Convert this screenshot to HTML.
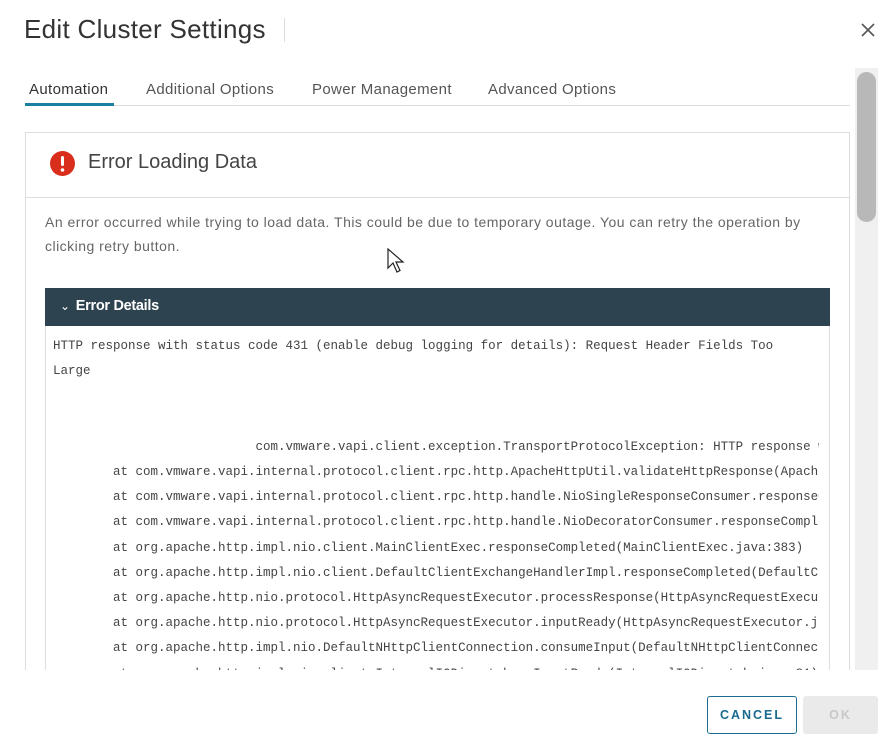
<!DOCTYPE html>
<html><head><meta charset="utf-8"><style>
*{margin:0;padding:0;box-sizing:border-box}
body{width:886px;height:744px;background:#fff;font-family:"Liberation Sans",sans-serif;position:relative;overflow:hidden;color:#333}
.abs{position:absolute}
h1{position:absolute;left:24px;top:14px;font-weight:normal;font-size:26px;color:#333;letter-spacing:0.3px}
.sep{left:284px;top:18px;width:1px;height:24px;background:#ddd}
.close{left:860px;top:22px}
.tab{top:81px;font-size:15px;color:#555;white-space:nowrap;letter-spacing:0.35px}
.tabline{left:25px;top:105px;width:825px;height:1px;background:#ddd}
.active{left:25px;top:103px;width:89px;height:3px;background:#1a7fa0}
.card{left:25px;top:132px;width:825px;height:560px;border:1px solid #ddd;border-bottom:none}
.cardhd{left:26px;top:197px;width:823px;height:1px;background:#ddd}
.desc{left:45px;font-size:14px;color:#666;white-space:nowrap;letter-spacing:0.48px}
.bar{left:45px;top:288px;width:785px;height:38px;background:#2e4350;color:#fff;font-size:14.5px;font-weight:bold;padding:10px 0 0 15px;letter-spacing:-0.3px}
.codebox{left:45px;top:326px;width:785px;height:344px;border-left:1px solid #ddd;border-right:1px solid #ddd;overflow:hidden}
.clip{width:773px;height:344px;overflow:hidden}
pre{font-family:"Liberation Mono",monospace;font-size:12.5px;line-height:25.2px;color:#444;padding:8px 0 0 7px;white-space:pre}
.foot{left:0;top:670px;width:886px;height:74px;background:#fff}
.track{left:855px;top:68px;width:23px;height:602px;background:#f0f0f0}
.thumb{left:857px;top:72px;width:19px;height:150px;background:#b8b8b8;border-radius:10px}
.btn{top:696px;height:38px;font-size:12.5px;letter-spacing:2px;text-align:center;line-height:36px;font-weight:bold}
</style></head><body>
<h1>Edit Cluster Settings</h1>
<div class="abs sep"></div>
<svg class="abs close" width="16" height="16" viewBox="0 0 16 16"><path d="M2 2L14 14M14 2L2 14" stroke="#555" stroke-width="1.6"/></svg>
<div class="abs tab" style="left:29px;color:#333">Automation</div>
<div class="abs tab" style="left:146px">Additional Options</div>
<div class="abs tab" style="left:312px">Power Management</div>
<div class="abs tab" style="left:488px">Advanced Options</div>
<div class="abs tabline"></div>
<div class="abs active"></div>
<div class="abs card"></div>
<div class="abs cardhd"></div>
<svg class="abs" style="left:50px;top:151px" width="25" height="25" viewBox="0 0 25 25"><circle cx="12.5" cy="12.5" r="12.5" fill="#d92e1b"/><rect x="11" y="5" width="3" height="10" rx="1.5" fill="#fff"/><circle cx="12.5" cy="19" r="1.8" fill="#fff"/></svg>
<div class="abs" style="left:88px;top:151px;font-size:20px;color:#444">Error Loading Data</div>
<div class="abs desc" style="top:214px">An error occurred while trying to load data. This could be due to temporary outage. You can retry the operation by</div>
<div class="abs desc" style="top:238px">clicking retry button.</div>
<svg class="abs" style="left:387px;top:248px" width="18" height="26" viewBox="0 0 18 26"><path d="M1 1L1 20L6 15L10 24L13 22.5L9 14L16 14Z" fill="#fff" stroke="#222" stroke-width="1.2"/></svg>
<div class="abs bar"><span style="font-weight:normal;font-size:12px;margin-right:6px">&#8964;</span>Error Details</div>
<div class="abs codebox"><div class="clip"><pre>HTTP response with status code 431 (enable debug logging for details): Request Header Fields Too
Large


                           com.vmware.vapi.client.exception.TransportProtocolException: HTTP response with status
        at com.vmware.vapi.internal.protocol.client.rpc.http.ApacheHttpUtil.validateHttpResponse(ApacheHttpUtil.java)
        at com.vmware.vapi.internal.protocol.client.rpc.http.handle.NioSingleResponseConsumer.responseCompleted
        at com.vmware.vapi.internal.protocol.client.rpc.http.handle.NioDecoratorConsumer.responseCompleted
        at org.apache.http.impl.nio.client.MainClientExec.responseCompleted(MainClientExec.java:383)
        at org.apache.http.impl.nio.client.DefaultClientExchangeHandlerImpl.responseCompleted(DefaultClient
        at org.apache.http.nio.protocol.HttpAsyncRequestExecutor.processResponse(HttpAsyncRequestExecutor.java)
        at org.apache.http.nio.protocol.HttpAsyncRequestExecutor.inputReady(HttpAsyncRequestExecutor.java:1)
        at org.apache.http.impl.nio.DefaultNHttpClientConnection.consumeInput(DefaultNHttpClientConnection
        at org.apache.http.impl.nio.client.InternalIODispatch.onInputReady(InternalIODispatch.java:81)</pre></div></div>
<div class="abs track"></div>
<div class="abs thumb"></div>
<div class="abs foot"></div>
<div class="abs btn" style="left:707px;width:90px;border:1.5px solid #1a6b8f;border-radius:3px;color:#1a6b8f">CANCEL</div>
<div class="abs btn" style="left:803px;width:75px;background:#eaeaea;color:#c8c8c8;border-radius:3px;line-height:38px">OK</div>
</body></html>
